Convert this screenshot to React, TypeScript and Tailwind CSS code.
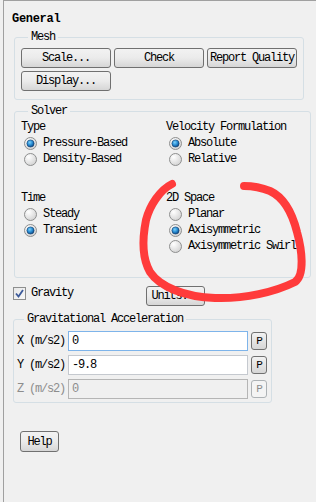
import React from "react";

const mono = "font-['Liberation_Mono','DejaVu_Sans_Mono',monospace] text-[12px] tracking-[-1.2px] leading-[16px] text-black";

function Btn({ label, className = "" }: { label: string; className?: string }) {
  return (
    <button
      className={`flex h-[20px] items-center justify-center rounded-[3px] border border-[#707070] bg-gradient-to-b from-[#f2f2f2] via-[#ebebeb] to-[#d6d6d6] ${mono} ${className}`}
    >
      {label}
    </button>
  );
}

function Radio({ checked, label }: { checked?: boolean; label: string }) {
  return (
    <div className="flex h-[16px] items-center pl-[3px]">
      <svg width="13" height="13" viewBox="0 0 13 13">
        <circle cx="6.5" cy="6.5" r="6" fill="url(#radioBg)" stroke="#8e8f8f" />
        {checked && <circle cx="6.5" cy="6.5" r="3.6" fill="url(#radioDot)" stroke="#0d3d6e" strokeWidth="0.6" />}
      </svg>
      <span className="ml-[6px]">{label}</span>
    </div>
  );
}

function Group({ title, className = "", children }: { title: string; className?: string; children: React.ReactNode }) {
  return (
    <fieldset className={`rounded-[3px] border border-[#d5dfe5] ${className}`}>
      <legend className={`ml-[7px] px-[3px] ${mono} leading-[14px]`}>{title}</legend>
      {children}
    </fieldset>
  );
}

function AccelRow({ axis, value, disabled }: { axis: string; value: string; disabled?: boolean }) {
  return (
    <div className="flex h-[20px] items-center">
      <span className={`w-[51px] ${disabled ? "text-[#8d8d8d]" : ""}`}>{axis} (m/s2)</span>
      <div
        className={`flex h-[20px] w-[180px] items-center border px-[3px] ${
          disabled
            ? "border-[#b5b5b5] bg-[#f0f0f0] text-[#8d8d8d]"
            : axis === "X"
            ? "border-[#7eb4ea] bg-white"
            : "border-[#c5c9cf] bg-white"
        }`}
      >
        {value}
      </div>
      <div
        className={`ml-[3px] flex h-[18px] w-[16px] items-center justify-center rounded-[3px] border text-[11px] ${
          disabled
            ? "border-[#adb2b5] bg-[#f4f4f4] text-[#8d8d8d]"
            : "border-[#707070] bg-gradient-to-b from-[#f2f2f2] to-[#d6d6d6]"
        }`}
      >
        P
      </div>
    </div>
  );
}

export default function App() {
  return (
    <div className={`relative h-[502px] w-[316px] overflow-hidden bg-[#f0f0f0] pl-[3px] ${mono}`}>
      <svg width="0" height="0" className="absolute">
        <defs>
          <radialGradient id="radioBg" cx="0.35" cy="0.3" r="0.8">
            <stop offset="0" stopColor="#ffffff" />
            <stop offset="1" stopColor="#cfcfcf" />
          </radialGradient>
          <radialGradient id="radioDot" cx="0.4" cy="0.35" r="0.7">
            <stop offset="0" stopColor="#7fd0f7" />
            <stop offset="0.5" stopColor="#2a8fd6" />
            <stop offset="1" stopColor="#0b3f78" />
          </radialGradient>
        </defs>
      </svg>

      <div className="h-full border-l border-t border-[#a0a0a0]">
        <div className="pt-[11px] pl-[8px]">
          <h1 className="text-[12px] font-bold leading-[14px] tracking-[-0.3px]">General</h1>
        </div>

        <Group title="Mesh" className="ml-[10px] mt-[3px] w-[289px] px-[6px] pt-[3px] pb-[8px]">
          <div className="flex gap-[3px]">
            <Btn label="Scale..." className="w-[90px]" />
            <Btn label="Check" className="w-[90px]" />
            <Btn label="Report Quality" className="w-[90px]" />
          </div>
          <div className="mt-[3px] flex">
            <Btn label="Display..." className="w-[90px]" />
          </div>
        </Group>

        <Group title="Solver" className="ml-[10px] mt-[3px] w-[297px] pl-[6px] pt-[1px] pb-[23px]">
          <div className="grid grid-cols-[145px_1fr]">
            <div>
              <div className="h-[15px] leading-[15px]">Type</div>
              <Radio checked label="Pressure-Based" />
              <Radio label="Density-Based" />
              <div className="mt-[24px] h-[15px] leading-[15px]">Time</div>
              <Radio label="Steady" />
              <Radio checked label="Transient" />
            </div>
            <div>
              <div className="h-[15px] leading-[15px]">Velocity Formulation</div>
              <Radio checked label="Absolute" />
              <Radio label="Relative" />
              <div className="mt-[24px] h-[15px] leading-[15px]">2D Space</div>
              <Radio label="Planar" />
              <Radio checked label="Axisymmetric" />
              <Radio label="Axisymmetric Swirl" />
            </div>
          </div>
        </Group>

        <div className="ml-[9px] mt-[8px] flex h-[20px] items-start">
          <div className="mt-[1px] flex h-[13px] w-[13px] items-center justify-center border border-[#8e8f8f] bg-gradient-to-br from-[#e8e8e8] to-[#f8f8f8]">
            <svg width="9" height="9" viewBox="0 0 9 9">
              <path d="M1 4.5 L3.5 7.5 L8 1" fill="none" stroke="#3c5a9a" strokeWidth="1.8" />
            </svg>
          </div>
          <span className="ml-[5px] leading-[14px]">Gravity</span>
          <Btn label="Units..." className="ml-[73px] w-[59px]" />
        </div>

        <Group
          title="Gravitational Acceleration"
          className="ml-[9px] mt-[5px] w-[259px] pl-[3px] pt-[4px] pb-[3px]"
        >
          <div className="flex flex-col gap-[4px]">
            <AccelRow axis="X" value="0" />
            <AccelRow axis="Y" value="-9.8" />
            <AccelRow axis="Z" value="0" disabled />
          </div>
        </Group>

        <div className="ml-[16px] mt-[28px] flex">
          <Btn label="Help" className="h-[21px] w-[39px]" />
        </div>
      </div>

      <svg className="pointer-events-none absolute inset-0" width="316" height="502">
        <path
          d="M172 184 C160 190 150 205 146 220 C142 240 142 258 150 272 C160 287 185 297 215 298 C245 299 275 292 295 282 C305 275 302 250 297 232 C292 212 283 197 270 191 C260 187 250 186 244 186"
          fill="none"
          stroke="#ff3b3b"
          strokeWidth="8"
          strokeLinecap="round"
          strokeLinejoin="round"
        />
      </svg>
    </div>
  );
}
